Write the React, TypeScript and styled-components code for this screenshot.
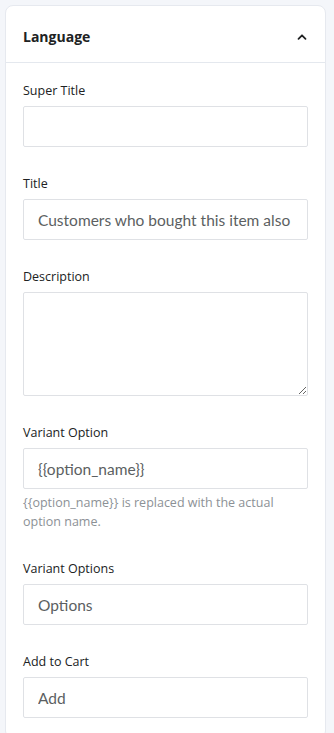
import React from 'react'
import styled, {createGlobalStyle} from 'styled-components'

const Global = createGlobalStyle`
  html, body {
    margin: 0;
    padding: 0;
    background: #f4f6fa;
    font-family: "Open Sans", "Noto Sans", sans-serif;
  }
`

interface iField {
  label: string
  value?: string
  help?: string
}

const Field = ({label, value, help}: iField) => {
  return (
    <FieldBox>
      <Label>{label}</Label>
      <Input readOnly value={value ?? ''} />
      {help && <Help>{help}</Help>}
    </FieldBox>
  )
}

const App = () => {
  return (
    <Page>
      <Global />
      <Card>
        <Header>
          <H3>Language</H3>
          <Chevron viewBox="0 0 12 12">
            <path d="M2.5 7.8 L6 4.3 L9.5 7.8" />
          </Chevron>
        </Header>
        <Body>
          <Field label="Super Title" />
          <Field label="Title" value="Customers who bought this item also bought" />
          <FieldBox>
            <Label>Description</Label>
            <TextArea />
          </FieldBox>
          <Field
            label="Variant Option"
            value="{{option_name}}"
            help="{{option_name}} is replaced with the actual option name."
          />
          <Field label="Variant Options" value="Options" />
          <Field label="Add to Cart" value="Add" />
        </Body>
      </Card>
    </Page>
  )
}

export default App

const Page = styled.div`
  padding: 5px 8px 0 5px;
  height: 733px;
  box-sizing: border-box;
  overflow: hidden;
`
const Card = styled.div`
  background: #fff;
  border: 1px solid #e6e9ef;
  border-radius: 8px;
  overflow: hidden;
`
const Header = styled.div`
  height: 57px;
  box-sizing: border-box;
  padding: 5px 17px 0;
  display: flex;
  align-items: center;
  justify-content: space-between;
  border-bottom: 1px solid #e4e8ee;
`
const H3 = styled.h3`
  margin: 0;
  font-size: 14px;
  font-weight: 700;
  color: #202223;
`
const Chevron = styled.svg`
  width: 12px;
  height: 12px;
  fill: none;
  stroke: #202223;
  stroke-width: 1.8;
  stroke-linecap: round;
  stroke-linejoin: round;
`
const Body = styled.div`
  padding: 19px 17px 20px;
  display: flex;
  flex-direction: column;
  gap: 28px;
`
const FieldBox = styled.div`
  display: flex;
  flex-direction: column;
`
const Label = styled.label`
  font-size: 12.5px;
  line-height: 18px;
  color: #202223;
  margin-bottom: 6px;
`
const Input = styled.input`
  box-sizing: border-box;
  height: 41px;
  width: 100%;
  border: 1px solid #dfe1e5;
  border-radius: 2px;
  padding: 0 14px;
  font-family: Lato, "Open Sans", sans-serif;
  font-size: 15.5px;
  color: #5c5f62;
  outline: none;
`
const TextArea = styled.textarea`
  box-sizing: border-box;
  height: 104px;
  width: 100%;
  border: 1px solid #dfe1e5;
  border-radius: 2px;
  resize: vertical;
  outline: none;
  font-family: "Open Sans", "Noto Sans", sans-serif;
`
const Help = styled.p`
  margin: 4px 0 1px;
  font-size: 12.5px;
  line-height: 19px;
  color: #8c9196;
`
